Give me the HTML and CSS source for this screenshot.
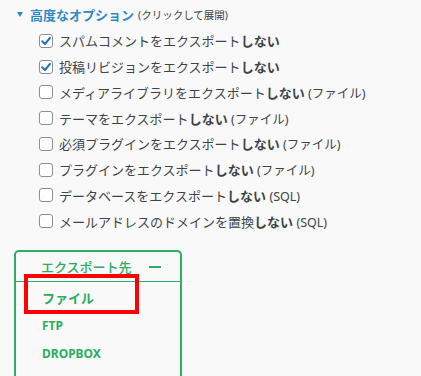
FILE: index.html
```html
<!DOCTYPE html>
<html lang="ja">
<head>
<meta charset="utf-8">
<link rel="stylesheet" href="styles.css">
</head>
<body>
<div class="heading">
  <span class="tri"></span>
  <span class="heading-title">高度なオプション</span>
  <span class="heading-note">(クリックして展開)</span>
</div>
<ul class="opts">
  <li class="opt"><span class="cb checked"><svg viewBox="0 0 14 14" width="14" height="14"><path d="M3.2 7.2 L6 10 L11 3.8" fill="none" stroke="#2271b1" stroke-width="2" stroke-linecap="round" stroke-linejoin="round"/></svg></span><span class="label">スパムコメントをエクスポート<b>しない</b></span></li>
  <li class="opt"><span class="cb checked"><svg viewBox="0 0 14 14" width="14" height="14"><path d="M3.2 7.2 L6 10 L11 3.8" fill="none" stroke="#2271b1" stroke-width="2" stroke-linecap="round" stroke-linejoin="round"/></svg></span><span class="label">投稿リビジョンをエクスポート<b>しない</b></span></li>
  <li class="opt"><span class="cb"></span><span class="label">メディアライブラリをエクスポート<b>しない</b> <small>(ファイル)</small></span></li>
  <li class="opt"><span class="cb"></span><span class="label">テーマをエクスポート<b>しない</b> <small>(ファイル)</small></span></li>
  <li class="opt"><span class="cb"></span><span class="label">必須プラグインをエクスポート<b>しない</b> <small>(ファイル)</small></span></li>
  <li class="opt"><span class="cb"></span><span class="label">プラグインをエクスポート<b>しない</b> <small>(ファイル)</small></span></li>
  <li class="opt"><span class="cb"></span><span class="label">データベースをエクスポート<b>しない</b> <small>(SQL)</small></span></li>
  <li class="opt"><span class="cb"></span><span class="label">メールアドレスのドメインを置換<b>しない</b> <small>(SQL)</small></span></li>
</ul>
<div class="dest">
  <div class="dest-head">
    <span>エクスポート先</span>
    <span class="minus"></span>
  </div>
  <ul class="dest-list">
    <li class="dest-item file">ファイル</li>
    <li class="dest-item">FTP</li>
    <li class="dest-item">DROPBOX</li>
  </ul>
  <div class="highlight"></div>
</div>
</body>
</html>
```
FILE: styles.css
```css
html, body {
  margin: 0;
  padding: 0;
  background: #f9f9f9;
  font-family: "Noto Sans", "Noto Sans CJK JP", sans-serif;
  color: #3c434a;
  overflow: hidden;
}
.heading {
  height: 28px;
  display: flex;
  align-items: center;
  padding-left: 17px;
}
.tri {
  width: 0;
  height: 0;
  border-left: 3px solid transparent;
  border-right: 3px solid transparent;
  border-top: 5px solid #2c89c4;
  margin-right: 7px;
}
.heading-title {
  color: #2c89c4;
  font-size: 13px;
  font-weight: 700;
}
.heading-note {
  font-size: 10.5px;
  margin-left: 4px;
  color: #3c434a;
}
.opts {
  list-style: none;
  margin: 0;
  padding: 0 0 0 39px;
}
.opt {
  height: 25.75px;
  display: flex;
  align-items: center;
}
.cb {
  width: 14px;
  height: 14px;
  box-sizing: border-box;
  border: 1px solid #8c8f94;
  border-radius: 3px;
  background: #fff;
  margin-right: 6px;
  position: relative;
  flex: none;
}
.cb svg {
  position: absolute;
  left: -1px;
  top: -1px;
}
.label {
  font-size: 13px;
  white-space: nowrap;
}
.label b {
  font-weight: 700;
}
.label small {
  font-size: 12.5px;
}
.dest {
  position: relative;
  margin: 16px 0 0 14px;
  width: 168px;
  height: 140px;
  box-sizing: border-box;
  border: 2px solid #2aae62;
  border-bottom: none;
  border-radius: 5px 5px 0 0;
  color: #2aae62;
}
.dest-head {
  height: 29px;
  border-bottom: 1px solid #2aae62;
  display: flex;
  align-items: center;
  justify-content: space-between;
  padding: 0 19px 0 25px;
  font-size: 13px;
  font-weight: 500;
}
.minus {
  width: 12px;
  height: 2px;
  background: #2aae62;
}
.dest-list {
  list-style: none;
  margin: 0;
  padding: 1px 0 0 26px;
}
.dest-item {
  height: 28px;
  display: flex;
  align-items: center;
  font-size: 12px;
  font-weight: 700;
}
.dest-item.file {
  font-size: 13px;
}
.highlight {
  position: absolute;
  left: 8px;
  top: 22px;
  width: 115px;
  height: 40px;
  box-sizing: border-box;
  border: 4px solid #ff0000;
}
```
